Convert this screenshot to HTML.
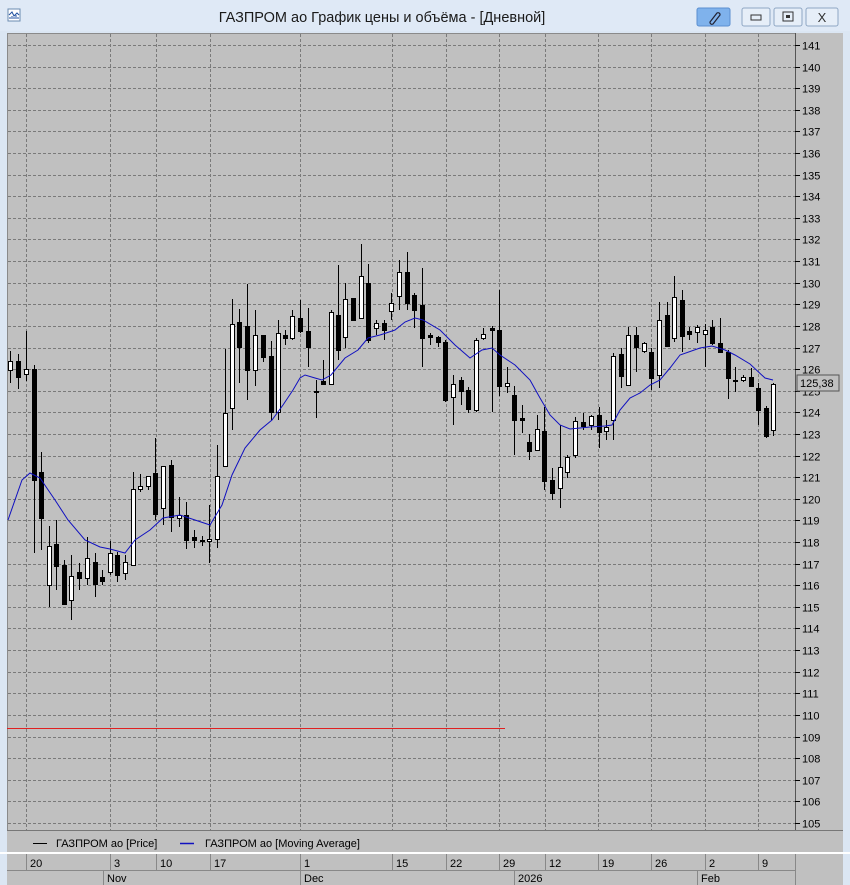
<!DOCTYPE html>
<html><head><meta charset="utf-8"><style>
html,body{margin:0;padding:0;width:850px;height:885px;overflow:hidden;background:#dbe6f3;font-family:"Liberation Sans",sans-serif}
svg{position:absolute;left:0;top:0}
</style></head><body>
<svg id="s" width="850" height="885" xmlns="http://www.w3.org/2000/svg" font-family="Liberation Sans, DejaVu Sans, sans-serif">
<rect x="0" y="0" width="850" height="885" fill="#dbe6f3"/>
<rect x="0" y="0" width="850" height="31" fill="#dfe9f6"/>
<g transform="translate(8,9)"><rect x="0" y="0" width="12" height="12" fill="#fff" stroke="#6a8ab0"/><path d="M1 6 L4 3 L6 7 L9 4 L11 6" stroke="#2050a0" fill="none"/><path d="M2 10V8M4 10V7M6 10V8M8 10V6M10 10V8" stroke="#2050a0"/></g>
<text x="382" y="22" font-size="14.5" text-anchor="middle" fill="#1a1a1a">ГАЗПРОМ ао График цены и объёма - [Дневной]</text>
<rect x="697" y="8" width="33" height="18" rx="2" fill="#7fb2ec" stroke="#5b8fd0"/>
<path d="M710 22 l7 -9 a2 2 0 0 1 3 2 l-7 9 a2 2 0 0 1 -3 -2z" fill="none" stroke="#223" stroke-width="1.2"/>
<rect x="742" y="8" width="28" height="18" rx="2" fill="#e6eef8" stroke="#8fa7c4"/>
<rect x="751" y="15" width="10" height="5" fill="none" stroke="#333"/>
<rect x="774" y="8" width="28" height="18" rx="2" fill="#e6eef8" stroke="#8fa7c4"/>
<rect x="783" y="12" width="10" height="9" fill="none" stroke="#333"/><rect x="786" y="15" width="4" height="3" fill="#333"/>
<rect x="806" y="8" width="32" height="18" rx="2" fill="#e6eef8" stroke="#8fa7c4"/>
<text x="822" y="22" font-size="13" text-anchor="middle" fill="#333">X</text>
<rect x="7" y="33" width="836" height="819" fill="#c0c0c0"/>
<line x1="7.5" y1="33" x2="7.5" y2="830" stroke="#8a8a8a"/>
<line x1="7" y1="33.5" x2="795" y2="33.5" stroke="#8a8a8a"/>
<line x1="795.5" y1="33" x2="795.5" y2="830" stroke="#555"/>
<line x1="7" y1="830.5" x2="843" y2="830.5" stroke="#777"/>
<g id="grid"></g>
<g id="axis" font-size="11" fill="#000"></g>
<line x1="7" y1="728.5" x2="505" y2="728.5" stroke="#e02020"/>
<g id="candles"></g>
<polyline id="ma" fill="none" stroke="#1010c0" stroke-width="1"/>
<rect x="797" y="375" width="42" height="16" fill="#c0c0c0" stroke="#555"/>
<text x="800" y="387" font-size="11">125,38</text>
<line x1="33" y1="843.5" x2="47" y2="843.5" stroke="#000"/>
<text x="56" y="847" font-size="11">ГАЗПРОМ ао [Price]</text>
<line x1="180" y1="843.5" x2="194" y2="843.5" stroke="#1010c0" stroke-width="1.5"/>
<text x="205" y="847" font-size="11">ГАЗПРОМ ао [Moving Average]</text>
<rect x="0" y="852" width="850" height="2" fill="#fff"/>
<rect x="7" y="854" width="836" height="31" fill="#c0c0c0"/>
<line x1="7" y1="870.5" x2="795" y2="870.5" stroke="#888"/>
<line x1="795.5" y1="854" x2="795.5" y2="885" stroke="#888"/>
<g id="dates" font-size="11"></g>
</svg>
<script>
var NS="http://www.w3.org/2000/svg";
function el(p,t,a,txt){var e=document.createElementNS(NS,t);for(var k in a)e.setAttribute(k,a[k]);if(txt)e.textContent=txt;document.getElementById(p).appendChild(e);return e;}
function Y(p){return 45+(141-p)*21.61;}
var vx=[26,110,156,210,300,392,446,499,545,598,651,705,758];
for(var p=105;p<=141;p++){var y=Math.round(Y(p))+0.5;el("grid","line",{x1:8,y1:y,x2:795,y2:y,stroke:"#7a7a7a","stroke-dasharray":"3,2"});
el("axis","line",{x1:795,y1:y,x2:800,y2:y,stroke:"#000"});el("axis","text",{x:802,y:y+4},""+p);}
vx.forEach(function(x){el("grid","line",{x1:x+0.5,y1:34,x2:x+0.5,y2:830,stroke:"#7a7a7a","stroke-dasharray":"3,2"});});
var dl=["20","3","10","17","1","15","22","29","12","19","26","2","9"];
vx.forEach(function(x,i){el("dates","line",{x1:x+0.5,y1:854,x2:x+0.5,y2:870,stroke:"#888"});el("dates","text",{x:x+4,y:867},dl[i]);});
[[103,"Nov"],[300,"Dec"],[514,"2026"],[697,"Feb"]].forEach(function(m){el("dates","line",{x1:m[0]+0.5,y1:870,x2:m[0]+0.5,y2:885,stroke:"#888"});el("dates","text",{x:m[0]+4,y:882},m[1]);});
var C=[[10,351,383,361,370,1],[18,354,389,361,377,0],[26,331,381,369,374,1],[34,365,553,369,480,0],[41,452,550,472,518,0],[49,526,607,546,585,1],[56,520,590,544,566,0],[64,560,605,565,604,0],[71,555,620,576,600,1],[79,563,590,572,578,0],[87,537,585,558,578,1],[95,553,597,562,584,0],[102,570,585,577,581,0],[110,541,575,553,572,1],[117,552,582,555,575,0],[125,555,580,562,573,1],[133,472,565,489,565,1],[140,474,492,486,489,1],[148,476,490,476,486,1],[155,438,520,473,514,0],[163,466,525,466,508,1],[171,460,532,465,517,0],[179,497,527,515,518,1],[186,502,549,515,540,0],[194,530,548,537,540,0],[202,536,546,540,541,0],[209,505,563,539,541,1],[217,445,548,476,539,1],[225,349,466,413,466,1],[232,299,430,324,408,1],[239,309,383,322,347,0],[247,284,400,326,370,0],[255,310,386,335,370,1],[263,336,362,335,357,0],[271,341,420,356,412,0],[278,320,420,333,412,1],[285,330,345,335,338,0],[292,310,340,316,338,1],[300,300,333,318,331,0],[308,308,367,331,347,0],[316,380,418,391,392,0],[323,360,385,381,384,0],[331,310,385,312,384,1],[338,265,360,315,350,0],[345,283,348,299,337,1],[353,298,320,298,320,0],[361,244,312,276,318,1],[368,264,343,283,340,0],[376,320,335,323,328,1],[384,320,340,323,330,0],[391,293,320,303,311,1],[399,260,310,272,296,1],[407,252,310,272,303,0],[414,293,328,295,310,0],[422,268,367,305,338,0],[430,333,345,335,337,0],[438,336,347,337,342,0],[445,340,402,342,400,0],[453,375,425,384,397,1],[461,377,405,380,391,0],[468,387,413,390,409,0],[476,338,412,340,410,1],[483,328,340,334,338,1],[492,326,412,328,330,0],[499,290,396,330,386,0],[507,367,393,383,386,1],[514,386,455,395,420,0],[522,405,433,418,420,0],[529,434,460,442,451,0],[537,415,450,429,450,1],[544,407,490,431,481,0],[552,468,500,480,493,0],[560,425,508,467,488,1],[567,455,478,457,472,1],[575,417,458,421,455,1],[583,413,430,422,426,0],[591,415,430,416,425,1],[599,407,448,415,432,0],[606,420,440,427,431,1],[613,353,440,356,420,1],[621,348,388,354,376,0],[628,327,385,335,385,1],[636,327,372,335,347,0],[644,342,353,343,351,1],[651,348,390,352,378,0],[659,302,388,320,375,1],[667,302,347,315,346,0],[674,276,342,297,338,1],[682,290,352,300,336,0],[689,327,340,331,334,0],[697,325,343,327,332,1],[705,324,367,330,334,1],[712,320,345,327,343,0],[720,318,353,343,352,0],[728,350,399,352,378,0],[735,367,392,380,381,0],[743,375,382,377,380,1],[751,368,387,377,386,0],[758,383,425,388,410,0],[766,406,438,408,436,0],[773,383,436,384,430,1]];
C.forEach(function(c){var x=c[0]+0.5;el("candles","line",{x1:x,y1:c[1],x2:x,y2:c[2],stroke:"#000"});
var h=Math.max(1,c[4]-c[3]);el("candles","rect",{x:c[0]-2+0.5,y:c[3]+0.5,width:4,height:h,fill:c[5]?"#fff":"#000",stroke:"#000"});});
var M=[[8,520],[22,480],[30,473],[40,478],[55,500],[68,520],[85,540],[100,547],[110,549],[125,553],[135,540],[150,530],[163,518],[180,515],[195,520],[210,525],[222,505],[232,475],[245,448],[260,430],[272,420],[283,405],[293,390],[300,378],[305,375],[315,378],[322,380],[331,375],[345,358],[358,350],[368,338],[380,335],[395,330],[405,322],[415,318],[423,320],[440,330],[455,345],[470,358],[482,350],[492,348],[500,355],[515,365],[530,380],[540,398],[550,415],[560,425],[570,429],[590,427],[605,426],[612,425],[620,410],[630,398],[640,393],[650,385],[660,380],[670,368],[680,355],[700,348],[712,346],[725,350],[735,355],[750,364],[765,378],[773,380]];
document.getElementById("ma").setAttribute("points",M.map(function(p){return p.join(",");}).join(" "));
</script>
</body></html>
